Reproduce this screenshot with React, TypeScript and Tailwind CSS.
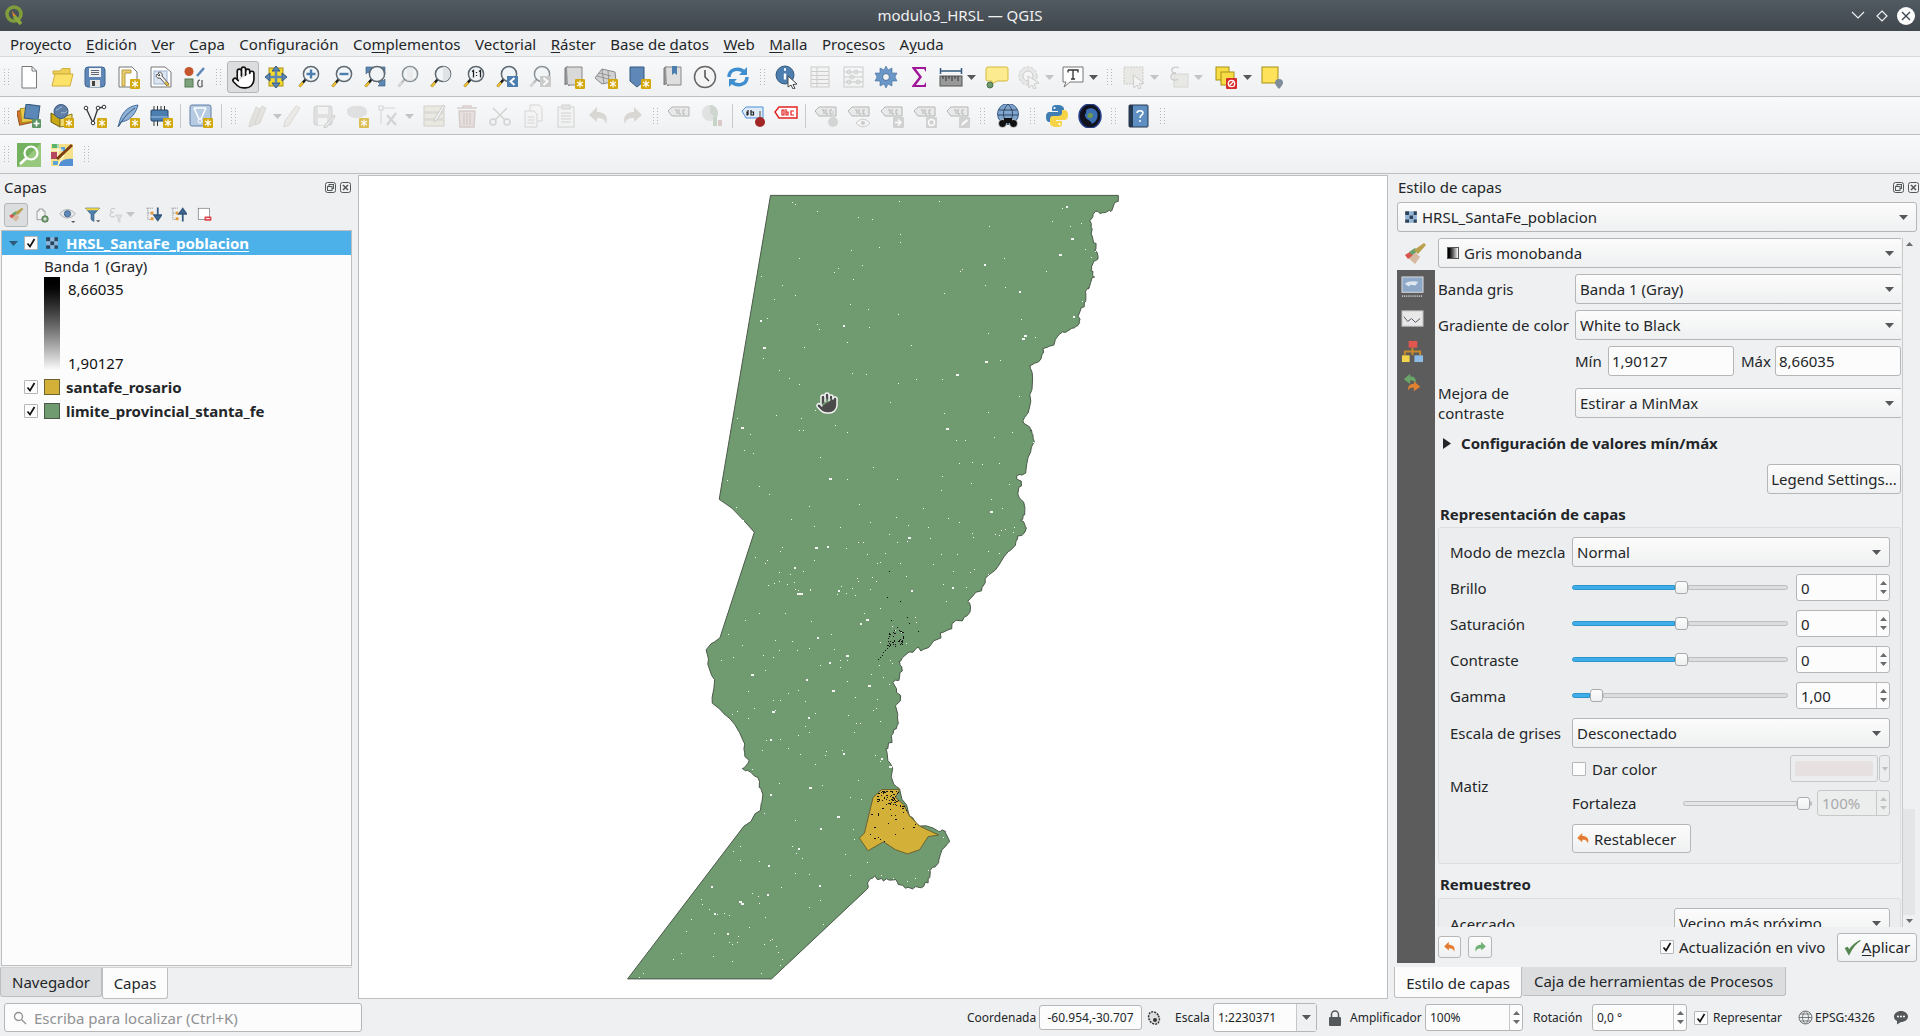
import type { ReactNode } from "react";
import { Hand } from "lucide-react";

/* ---------- small drawn icons ---------- */

const Badge = () => (
  <g>
    <rect x="14" y="14" width="10" height="10" rx="1" fill="#d3a80f" />
    <path d="M19 15.5v7M16 17l6 4M22 17l-6 4" stroke="#fff" strokeWidth="1.2" />
  </g>
);

const Mag = ({ children, dim }: { children?: ReactNode; dim?: boolean }) => (
  <g>
    <line x1="9" y1="14" x2="2.5" y2="21.5" stroke={dim ? "#aaa" : "#1a1a1a"} strokeWidth="2.6" />
    <line x1="6" y1="17.5" x2="2.5" y2="21.5" stroke={dim ? "#ccc" : "#f0c22e"} strokeWidth="2.4" />
    <circle cx="14" cy="9" r="7.6" fill="#f2f5f7" stroke="#5f6a73" strokeWidth="1.5" />
    {children}
  </g>
);

const Label = ({ color = "#999", bg = "#e4e4e4" }: { color?: string; bg?: string }) => (
  <g>
    <path d="M1 7l4-4h17v9H5z" fill={bg} stroke={color} />
    <path d="M8 6h2v4M12 5v5h2M18 6h-2v4h2" stroke={color} fill="none" strokeWidth="1" />
  </g>
);

const icons: Record<string, ReactNode> = {
  new: (
    <g fill="#fff" stroke="#777">
      <path d="M5 1.5h10l4.500 4.500v17H5z" />
      <path d="M15 1.500v4.500h4.500" fill="none" />
    </g>
  ),
  open: (
    <g stroke="#d1ae3a">
      <path d="M3 6h7l2-2.500h8V9H3z" fill="#efcf55" />
      <path d="M5 9h18l-3 12H2z" fill="#fde26a" />
    </g>
  ),
  save: (
    <g>
      <rect x="2" y="2" width="20" height="20" rx="3" fill="#5f88b8" stroke="#3f658f" />
      <rect x="6" y="3" width="12" height="9" fill="#eef1f4" />
      <path d="M8 5.500h8M8 7.500h8M8 9.500h8" stroke="#667" />
      <rect x="7" y="15" width="10" height="7" fill="#e6e6e6" />
      <rect x="9" y="16" width="3" height="5" fill="#444" />
    </g>
  ),
  layout: (
    <g>
      <path d="M3 2h13l5 5v15H3z" fill="#fff" stroke="#777" />
      <path d="M6 5h9v3H9v13H6z" fill="#e8cd72" stroke="#b89c3c" />
      <Badge />
    </g>
  ),
  manager: (
    <g>
      <path d="M2 2h14l6 5v15H2z" fill="#fff" stroke="#777" />
      <rect x="5" y="6" width="13" height="13" fill="#dce6f2" stroke="#9db4d1" />
      <path d="M9 8c2-2 5 0 4 3l7 8-2 2-7-8c-3 1-5-2-3-4l2 2 1-1z" fill="#eee" stroke="#555" />
      <path d="M16 17l4 4" stroke="#d8b23a" strokeWidth="2" />
    </g>
  ),
  style: (
    <g>
      <circle cx="7" cy="6.500" r="4.500" fill="#c4552d" />
      <path d="M15 11l7-8" stroke="#5f88b8" strokeWidth="2.500" />
      <rect x="3" y="14" width="8" height="8" fill="#7ca37c" stroke="#557755" />
      <path d="M18 15c-3 0-3 7 0 7s2-2 2-3v-4M20 22v-4" stroke="#555" fill="none" strokeWidth="1.200" />
    </g>
  ),
  panSel: (
    <g>
      <rect x="5" y="3" width="14" height="18" fill="#f6d92f" stroke="#a88f17" />
      <path d="M12 1l4 5H8zM12 23l4-5H8zM1 12l5-4v8zM23 12l-5-4v8z" fill="#5c88b5" stroke="#35597e" />
      <path d="M6 12h12M12 6v12" stroke="#5c88b5" strokeWidth="2.500" />
    </g>
  ),
  zoomIn: (
    <Mag>
      <path d="M14 4.500v9M9.500 9h9" stroke="#4d7eb0" strokeWidth="2.400" />
    </Mag>
  ),
  zoomOut: (
    <Mag>
      <path d="M9.500 9h9" stroke="#4d7eb0" strokeWidth="2.400" />
    </Mag>
  ),
  zoomFull: (
    <g>
      <path d="M3 2h7l-2 2 3 3-3 3-3-3-2 2zM22 2v7l-2-2-3 3-3-3 3-3-2-2zM22 21h-7l2-2-3-3 3-3 3 3 2-2z" fill="#5c88b5" stroke="#35597e" strokeWidth=".6" />
      <Mag />
    </g>
  ),
  zoomSel: (
    <Mag dim>
      <path d="M14 2v14" stroke="#ddd" strokeWidth="6" opacity=".5" />
    </Mag>
  ),
  zoomLayer: (
    <Mag>
      <path d="M14 1.500a7.500 7.500 0 0 1 0 15z" fill="#dfe3e6" />
    </Mag>
  ),
  zoom11: (
    <Mag>
      <path d="M10 6.500l1.500-1v7M17 6.500l1.500-1v7M14.500 7v1M14.500 10v1" stroke="#222" fill="none" strokeWidth="1.300" />
    </Mag>
  ),
  zoomLast: (
    <g>
      <Mag />
      <rect x="12" y="11" width="11" height="11" fill="#4d7eb0" />
      <path d="M19.500 13l-4 3.500 4 3.500" stroke="#fff" strokeWidth="2" fill="none" />
    </g>
  ),
  zoomNext: (
    <g>
      <Mag dim />
      <rect x="12" y="11" width="11" height="11" fill="#bbb" />
      <path d="M15.500 13l4 3.500-4 3.500" stroke="#fff" strokeWidth="2" fill="none" />
    </g>
  ),
  newMap: (
    <g>
      <path d="M4 3c2-2 4-1 4 1v17c0-2-2-3-4-1z" fill="#999" stroke="#777" />
      <path d="M6 2h15v18H7" fill="#d9d9d9" stroke="#888" />
      <Badge />
    </g>
  ),
  map3d: (
    <g>
      <path d="M1 13L8 4l13 3 1 9-14 3z" fill="#d2d2d2" stroke="#888" />
      <path d="M5 8l12 3M3 11l15 4M8 4l2 15M14 6l1 11" stroke="#888" fill="none" strokeWidth=".8" />
      <Badge />
    </g>
  ),
  bookmark: (
    <g>
      <path d="M3 2h14v14l-7 6-7-6z" fill="#5f88b8" stroke="#35597e" />
      <Badge />
    </g>
  ),
  bookmarks: (
    <g>
      <path d="M4 3c2-2 4-1 4 1v17c0-2-2-3-4-1z" fill="#999" stroke="#777" />
      <path d="M6 2h15v18H7" fill="#dedede" stroke="#888" />
      <path d="M12 1h5v9l-2.500-2-2.500 2z" fill="#4d7eb0" />
    </g>
  ),
  clock: (
    <g>
      <circle cx="12" cy="12" r="10.500" fill="#f4f4f4" stroke="#666" strokeWidth="1.500" />
      <path d="M12 5v7l4 4" stroke="#444" strokeWidth="1.400" fill="none" />
    </g>
  ),
  refresh: (
    <g fill="none" stroke="#3f8fd0" strokeWidth="3.400">
      <path d="M3 12c0-8 10-10 15-5" />
      <path d="M21 12c0 8-10 10-15 5" />
      <path d="M21 2v8h-8z" fill="#3f8fd0" stroke="none" />
      <path d="M3 22v-8h8z" fill="#3f8fd0" stroke="none" />
    </g>
  ),
  identify: (
    <g>
      <circle cx="10" cy="10" r="9" fill="#4d7eb0" stroke="#35597e" />
      <path d="M10 8.500v6M9 4.500h2" stroke="#fff" strokeWidth="2.400" />
      <path d="M13 11l9 8-4 .5 2 4-2 .5-2-4-3 2z" fill="#fff" stroke="#444" />
    </g>
  ),
  table: (
    <g fill="#f2f2f2" stroke="#bbb">
      <rect x="3" y="2" width="18" height="20" />
      <path d="M3 6.500h18M3 10.500h18M3 14.500h18M3 18.500h18M9 2v20" fill="none" />
    </g>
  ),
  abacus: (
    <g fill="none" stroke="#bbb">
      <rect x="3" y="2" width="19" height="20" />
      <path d="M3 7h19M3 12h19M3 17h19" />
      <circle cx="8" cy="7" r="2" />
      <circle cx="15" cy="7" r="2" />
      <circle cx="11" cy="12" r="2" />
      <circle cx="17" cy="17" r="2" />
      <circle cx="8" cy="17" r="2" />
    </g>
  ),
  gear: (
    <g>
      <path d="M12 1l2 4 4-2 0 5 5 0-2 4 2 4-5 0 0 5-4-2-2 4-2-4-4 2 0-5-5 0 2-4-2-4 5 0 0-5 4 2z" fill="#6a96c8" stroke="#44709e" strokeWidth=".6" />
      <circle cx="12" cy="12" r="3.500" fill="#f1f1f1" stroke="#44709e" />
    </g>
  ),
  sigma: <path d="M5 2h14v5l-2-3H9l6 8-6 8h8l2-3v5H5v-1l7-9-7-9z" fill="#a0189a" />,
  ruler: (
    <g>
      <rect x="1" y="11" width="22" height="10" fill="#999" stroke="#555" />
      <path d="M4 11v3M7 11v5M10 11v3M13 11v5M16 11v3M19 11v5" stroke="#333" />
      <path d="M1 6h22M1.500 3v6M22.500 3v6" stroke="#35597e" strokeWidth="1.500" />
    </g>
  ),
  tip: (
    <g>
      <path d="M3 2h18a2 2 0 0 1 2 2v10a2 2 0 0 1-2 2H12l-5 3v-3H3a2 2 0 0 1-2-2V4a2 2 0 0 1 2-2z" fill="#fdeb90" stroke="#d3b93c" />
      <circle cx="5" cy="20" r="3" fill="#6f9a6e" stroke="#49704a" />
    </g>
  ),
  action: (
    <g>
      <circle cx="11" cy="11" r="9" fill="#e3e3e3" stroke="#bbb" strokeDasharray="3 1.500" />
      <circle cx="11" cy="11" r="5" fill="#f6f6f6" stroke="#bbb" />
      <path d="M11 11l11 7-5 1 2 4-2 1-2-4-3 3z" fill="#f4f4f4" stroke="#bbb" />
    </g>
  ),
  text: (
    <g>
      <path d="M2 2h20v15H9l-6 5 2-5H2z" fill="#fff" stroke="#777" />
      <path d="M7 5h10v2.500M12 5v9M10 14h4M7 5v2.500" stroke="#333" fill="none" strokeWidth="1.300" />
    </g>
  ),
  selectTool: (
    <g>
      <rect x="2" y="2" width="19" height="17" fill="#e4e3dd" stroke="#bbb" strokeDasharray="2 1" />
      <path d="M11 10l11 8-5 1 2 4-2 1-2-4-3 3z" fill="#f4f4f4" stroke="#bbb" />
    </g>
  ),
  epsilon: (
    <g>
      <rect x="8" y="9" width="14" height="13" fill="#e4e3dd" stroke="#ccc" />
      <path d="M13 3c-4-2-8 0-7 3 0 2 2 2 4 2-3 0-5 1-5 4s4 4 7 2" fill="none" stroke="#bbb" strokeWidth="1.300" />
    </g>
  ),
  deselect: (
    <g>
      <rect x="1" y="2" width="13" height="13" fill="#f8dc45" stroke="#a88f17" />
      <rect x="6" y="7" width="13" height="13" fill="#f8dc45" stroke="#a88f17" />
      <rect x="11" y="13" width="11" height="11" rx="1" fill="#d82b2b" />
      <circle cx="16.500" cy="18.500" r="3.200" fill="none" stroke="#fff" strokeWidth="1.300" />
      <path d="M14.500 20.500l4-4" stroke="#fff" strokeWidth="1.300" />
    </g>
  ),
  pin: (
    <g>
      <rect x="2" y="2" width="16" height="16" fill="#fde25a" stroke="#a88f17" />
      <path d="M19 14a4 4 0 0 1 4 4c0 2-4 6-4 6s-4-4-4-6a4 4 0 0 1 4-4z" fill="#7f8c99" />
    </g>
  ),
  dataSource: (
    <g>
      <rect x="1" y="6" width="12" height="14" transform="rotate(-12 7 13)" fill="#d3762c" stroke="#9a4f16" />
      <rect x="4" y="4" width="12" height="14" transform="rotate(-6 10 11)" fill="#edc94b" stroke="#a88f17" />
      <rect x="8" y="1" width="14" height="14" transform="rotate(8 15 8)" fill="#5c88b8" stroke="#35597e" />
      <rect x="15" y="15" width="9" height="9" rx="1" fill="#5e9463" />
      <path d="M19.500 16.500v6M16.500 19.500h6" stroke="#fff" strokeWidth="1.600" />
    </g>
  ),
  gpkg: (
    <g>
      <path d="M1 9l9 5v9l-9-5z" fill="#c9a816" stroke="#6e5c0a" />
      <path d="M10 14l12-4v11l-12 2z" fill="#ecd86a" stroke="#8d7a1c" />
      <circle cx="11" cy="7.500" r="7" fill="#5f7fa6" stroke="#3b5a80" />
      <path d="M6 6c3 0 3-3 6-3M11 9c3-1 4 1 6-2" stroke="#a6bdd8" fill="none" />
      <Badge />
    </g>
  ),
  newShp: (
    <g>
      <path d="M3 4l7 15 5-15 6-1" fill="none" stroke="#333" strokeWidth="1.300" />
      <circle cx="3" cy="4" r="1.800" fill="#fff" stroke="#333" />
      <circle cx="10" cy="19" r="1.800" fill="#fff" stroke="#333" />
      <circle cx="15" cy="4" r="1.800" fill="#fff" stroke="#333" />
      <circle cx="21" cy="3" r="1.800" fill="#fff" stroke="#333" />
      <Badge />
    </g>
  ),
  quill: (
    <g>
      <path d="M22 1c-9 1-15 6-18 15l-2 7 3-5 4-1c6-2 11-8 13-16z" fill="#8fb1d6" stroke="#44709e" />
      <path d="M19 4C13 8 8 13 3 22" stroke="#35597e" fill="none" />
      <Badge />
    </g>
  ),
  chip: (
    <g>
      <rect x="2" y="6" width="17" height="11" rx="1" fill="#4d7eb0" stroke="#24486e" />
      <path d="M5 2v4M8.500 2v4M12 2v4M15.500 2v4M5 17v5M8.500 17v5" stroke="#333" />
      <path d="M2 13h17" stroke="#9fc0e2" />
      <Badge />
    </g>
  ),
  vdb: (
    <g>
      <rect x="1" y="1" width="21" height="21" rx="2" fill="#b6cbe2" stroke="#5f7fa6" />
      <path d="M5 4l6 13 6-13M5 4h12" fill="none" stroke="#fff" strokeWidth="1.500" />
      <circle cx="11" cy="17" r="2" fill="#b6cbe2" stroke="#fff" />
      <Badge />
    </g>
  ),
  pencils: (
    <g fill="#dcdad4" stroke="#cfcdc6">
      <path d="M11 3l4 2-6 16-5 2 1-5z" />
      <path d="M17 2l4 2-6 15-5 2 1-5z" />
    </g>
  ),
  pencil: <path d="M17 2l4 2-11 17-5 2 1-6z" fill="#e8e6e0" stroke="#cfcdc6" />,
  saveEdit: (
    <g>
      <rect x="2" y="2" width="18" height="19" rx="2" fill="#d8d8d8" stroke="#c4c4c4" />
      <rect x="6" y="3" width="10" height="7" fill="#f3f3f3" />
      <rect x="6" y="14" width="9" height="7" fill="#f3f3f3" />
      <path d="M22 11l1 2-8 10-3 1 1-3z" fill="#e6e6e6" stroke="#bbb" />
    </g>
  ),
  blob: (
    <g>
      <path d="M2 6c2-5 12-5 17-3 4 2 4 8 0 9-4 1-6 3-10 2S1 11 2 6z" fill="#d8d8d8" />
      <path d="M16 12l1 1" stroke="#bbb" />
      <Badge />
    </g>
  ),
  vertex: (
    <g fill="none" stroke="#c8c8c8">
      <rect x="2" y="2" width="4" height="4" />
      <path d="M6 4h12M4 6v14" />
      <path d="M10 11l9 10M19 9l-9 12" strokeWidth="2.400" />
    </g>
  ),
  tableEdit: (
    <g>
      <g fill="#e6e4da" stroke="#c6c4b8">
        <rect x="2" y="2" width="20" height="6" />
        <rect x="2" y="9" width="20" height="6" />
        <rect x="2" y="16" width="20" height="6" />
      </g>
      <path d="M21 1l2 1-8 14-3 2 1-4z" fill="#f2f2f2" stroke="#bbb" />
    </g>
  ),
  trash: (
    <g fill="none" stroke="#c9bcb8" strokeWidth="1.400">
      <path d="M2 4h20M8 4V2h8v2" />
      <path d="M4 7h16l-1 16H5z" fill="#e0d7d4" />
      <path d="M9 9v12M12 9v12M15 9v12" />
    </g>
  ),
  scissors: (
    <g fill="none" stroke="#c6c6c6" strokeWidth="1.500">
      <circle cx="5" cy="18" r="3" />
      <circle cx="19" cy="18" r="3" />
      <path d="M7 16L19 4M17 16L5 4" />
    </g>
  ),
  copy: (
    <g fill="#f4f4f4" stroke="#c8c8c8">
      <path d="M9 1h9l3 3v13H9z" />
      <path d="M4 7h9l3 3v13H4z" />
      <path d="M6.500 13h7M6.500 16h7M6.500 19h7" />
    </g>
  ),
  paste: (
    <g fill="#f2f2f2" stroke="#c4c4c4">
      <rect x="4" y="3" width="16" height="20" />
      <rect x="8" y="1" width="8" height="4" fill="#ddd" />
      <path d="M7 9h10M7 12h10M7 15h10M7 18h10" />
    </g>
  ),
  undo: <path d="M10 3L2 11l8 7v-4c5 0 8 1 9 6 3-8-2-12-9-12z" fill="#cfcbc6" />,
  redo: <path d="M14 3l8 8-8 7v-4c-5 0-8 1-9 6-3-8 2-12 9-12z" fill="#cfcbc6" />,
  abc: <Label />,
  pie: (
    <g>
      <circle cx="10" cy="9" r="8" fill="#d9d9d9" />
      <path d="M10 9V1a8 8 0 0 1 6 13z" fill="#bfc9bf" />
      <rect x="13" y="13" width="4" height="9" fill="#b5c9b5" />
      <rect x="18" y="16" width="4" height="6" fill="#d3b8b8" />
    </g>
  ),
  abPin: (
    <g>
      <path d="M1 7l4-4h17v11H5z" fill="#dfeaf6" stroke="#4a90d9" />
      <path d="M7 6v5M10 6v5h2.500V8H10M7 8h-1v3h1" stroke="#222" fill="none" strokeWidth="1.200" />
      <path d="M19 7v8" stroke="#999" strokeWidth="2" />
      <circle cx="19" cy="18" r="5" fill="#a32626" />
    </g>
  ),
  abcRed: (
    <g>
      <path d="M1 8l4-5h18v11H5z" fill="#fff" stroke="#e32020" strokeWidth="1.400" />
      <path d="M8 6h2v5H8zM12 5v6h2V8h-2M20 7h-3v4h3" stroke="#e32020" fill="none" strokeWidth="1.200" />
    </g>
  ),
  abGrey: (
    <g>
      <Label />
      <path d="M19 7v8" stroke="#ccc" strokeWidth="2" />
      <circle cx="19" cy="18" r="5" fill="#c8c8c8" />
    </g>
  ),
  abcEye: (
    <g>
      <Label />
      <path d="M9 19c4-5 10-5 14 0-4 5-10 5-14 0z" fill="#f5f5f5" stroke="#bbb" />
      <circle cx="16" cy="19" r="2" fill="#bbb" />
    </g>
  ),
  abcMove: (
    <g>
      <Label />
      <rect x="13" y="13" width="11" height="11" rx="1" fill="#c4c4c4" />
      <path d="M15 18.500h5M18 15.500l3 3-3 3" stroke="#fff" strokeWidth="1.600" fill="none" />
    </g>
  ),
  abcRot: (
    <g>
      <Label />
      <rect x="13" y="13" width="11" height="11" rx="1" fill="#c4c4c4" />
      <circle cx="18.500" cy="18.500" r="3" stroke="#fff" strokeWidth="1.500" fill="none" />
    </g>
  ),
  abcPen: (
    <g>
      <Label />
      <rect x="13" y="13" width="11" height="11" rx="1" fill="#c4c4c4" />
      <path d="M15 22l1-3 5-4 1 2-5 4z" fill="#fff" />
    </g>
  ),
  globeFind: (
    <g>
      <circle cx="12" cy="10" r="10.500" fill="#7ea4cf" stroke="#3b5f8a" />
      <path d="M3 6h18M2 11h20M12 0c-6 6-6 14 0 20M12 0c6 6 6 14 0 20" stroke="#234" fill="none" strokeWidth=".8" />
      <circle cx="6.500" cy="19.500" r="4" fill="#111" stroke="#fff" strokeWidth=".6" />
      <circle cx="17.500" cy="19.500" r="4" fill="#111" stroke="#fff" strokeWidth=".6" />
      <rect x="8" y="14" width="8" height="5" fill="#111" />
    </g>
  ),
  python: (
    <g>
      <path d="M12 1C7 1 7 3 7 5v2h6v1H5C2 8 1 10 1 13s1 5 4 5h2v-3c0-2 2-3 4-3h5c2 0 3-1 3-3V5c0-2-2-4-7-4z" fill="#3f7eb5" />
      <circle cx="9.500" cy="4" r="1.100" fill="#fff" />
      <path d="M12 23c5 0 5-2 5-4v-2h-6v-1h8c3 0 4-2 4-5s-1-5-4-5h-2v3c0 2-2 3-4 3H8c-2 0-3 1-3 3v4c0 2 2 4 7 4z" fill="#f7d348" />
      <circle cx="14.500" cy="20" r="1.100" fill="#fff" />
    </g>
  ),
  earth: (
    <g>
      <ellipse cx="12" cy="12" rx="11" ry="12" fill="#10131f" stroke="#27418a" strokeWidth="1.500" />
      <path d="M8 6c4-3 9-2 11 2 2 5-1 10-5 12-1-4-6-4-7-8 0-3 2-3 1-6z" fill="#3a6fb3" />
      <path d="M10 10c2-2 5-1 5 1s-2 4-4 3-2-3-1-4z" fill="#6f9a4e" />
    </g>
  ),
  help: (
    <g>
      <rect x="3" y="1" width="19" height="22" rx="1" fill="#5f8fc2" stroke="#24384f" />
      <rect x="3" y="1" width="4" height="22" fill="#24384f" />
      <path d="M11 9c0-3 6-3 6 0 0 2-3 2-3 5M14 16v2" stroke="#fff" strokeWidth="1.500" fill="none" />
    </g>
  ),
  locator: (
    <g>
      <rect x="0" y="0" width="24" height="24" fill="#75b25f" />
      <path d="M0 24L24 0v24z" fill="#a5d28a" opacity=".7" />
      <circle cx="14" cy="10" r="6.500" fill="none" stroke="#fff" strokeWidth="2.200" />
      <path d="M9.500 15L3 21" stroke="#fff" strokeWidth="2.600" />
    </g>
  ),
  osmEdit: (
    <g>
      <rect x="1" y="1" width="22" height="22" fill="#f6e08a" />
      <path d="M1 9h6v7H1z" fill="#b5475f" />
      <path d="M2 1h7v4H2z" fill="#58b36b" />
      <path d="M11 4h4v4h-4zM3 18h5v4H3z" fill="#5aa7d6" />
      <path d="M9 23c0-5 6-8 14-7v7z" fill="#5590d2" />
      <path d="M1 7h12M8 1v14M14 12l-6 10" stroke="#fff" fill="none" />
      <path d="M7 16L22 2" stroke="#7b3f12" strokeWidth="3" />
    </g>
  ),
  /* dock toolbar */
  brush: (
    <g>
      <path d="M2 13l8-5 7 7-5 7z" fill="#d7b8a0" />
      <path d="M2 13l5-3 3 3-5 4z" fill="#d9534f" />
      <path d="M6 10l6-4 3 3-6 4z" fill="#6aa06a" />
      <path d="M11 8l4 4 8-9-2-2z" fill="#b8a04c" />
    </g>
  ),
  addGroup: (
    <g fill="none" stroke="#777">
      <path d="M9 3h6v3h3v13H6V6h3z" fill="#f4f4f4" />
      <circle cx="18" cy="18" r="5" fill="#6f9a6e" stroke="#49704a" />
      <path d="M18 15.500v5M15.500 18h5" stroke="#fff" strokeWidth="1.500" />
    </g>
  ),
  eye: (
    <g>
      <path d="M1 11c6-8 16-8 22 0-6 8-16 8-22 0z" fill="#e8e8e8" stroke="#999" />
      <circle cx="12" cy="11" r="4.500" fill="#5f88b8" stroke="#35597e" />
      <path d="M17 21h6l-3 3z" fill="#555" />
    </g>
  ),
  filter: (
    <g>
      <path d="M2 3h20l-8 9v10l-4-3v-7z" fill="#4d7eb0" stroke="#35597e" />
      <path d="M2 3h20l-2 3H4z" fill="#f5d93b" />
      <path d="M17 20h6l-3 3z" fill="#555" />
    </g>
  ),
  epsDim: (
    <g>
      <path d="M11 3C7 1 3 3 4 6c0 2 2 2 4 2-3 0-5 1-5 4s4 4 7 2" fill="none" stroke="#bbb" strokeWidth="1.300" />
      <path d="M11 12h10l-3 5v6l-3-2v-4z" fill="#ddd" stroke="#ccc" />
    </g>
  ),
  expand: (
    <g>
      <path d="M2 3h10M4 3v16h6M4 10h6" stroke="#777" fill="none" strokeDasharray="1.500 1" />
      <rect x="8" y="8" width="4" height="4" fill="#e69a33" />
      <rect x="8" y="16" width="4" height="4" fill="#e69a33" />
      <path d="M18 2v14M13 13l5 7 5-7z" stroke="#35597e" strokeWidth="2.500" fill="#4d7eb0" />
    </g>
  ),
  collapse: (
    <g>
      <path d="M2 3h10M4 3v16h6M4 10h6" stroke="#777" fill="none" strokeDasharray="1.500 1" />
      <rect x="8" y="8" width="4" height="4" fill="#e69a33" />
      <rect x="8" y="16" width="4" height="4" fill="#e69a33" />
      <path d="M18 22V8M13 11l5-7 5 7z" stroke="#35597e" strokeWidth="2.500" fill="#4d7eb0" />
    </g>
  ),
  removeLayer: (
    <g>
      <rect x="2" y="2" width="18" height="18" fill="#fff" stroke="#666" />
      <rect x="12" y="15" width="11" height="7" rx="1" fill="#e0424a" />
      <path d="M14.500 18.500h6" stroke="#fff" strokeWidth="1.500" />
    </g>
  ),
  /* layer properties sidebar */
  sideInfo: (
    <g>
      <rect x="1" y="1" width="22" height="16" fill="#8ea9c8" stroke="#ddd" />
      <path d="M4 8c4-3 9-3 14-2l-3 4-5-1-2 2z" fill="#dfe7f0" />
      <path d="M1 21h22" stroke="#ccc" strokeWidth="2" strokeDasharray="1 1" />
    </g>
  ),
  sideHist: (
    <g>
      <rect x="1" y="3" width="22" height="16" fill="#e8e8e8" stroke="#bbb" />
      <path d="M3 9l4 5 4-3 4 4 5-4" stroke="#556" fill="none" />
    </g>
  ),
  sideHier: (
    <g>
      <rect x="8" y="1" width="9" height="7" fill="#e2564f" />
      <path d="M12 8v4M4 16v-4h16v4M12 12v4" stroke="#c88b2c" strokeWidth="2" fill="none" />
      <rect x="1" y="16" width="8" height="7" fill="#f2d34c" />
      <rect x="14" y="16" width="9" height="7" fill="#8fbce6" />
    </g>
  ),
  sideHistory: (
    <g>
      <path d="M10 2L3 8l7 5V9c3 0 5 1 6 3 1-5-2-7-6-7z" fill="#6aa66a" />
      <path d="M14 10l7 6-7 5v-4c-3 0-5 1-6 3-1-5 2-7 6-7z" fill="#e0812f" />
    </g>
  ),
  undoOr: <path d="M10 3L2 11l8 7v-4c5 0 8 1 9 6 3-8-2-12-9-12z" fill="#e57b32" />,
  redoGr: <path d="M14 3l8 8-8 7v-4c-5 0-8 1-9 6-3-8 2-12 9-12z" fill="#6fb074" />,
  check: <path d="M2 13l5 9C11 13 16 6 23 2 15 6 10 11 7 16l-2-4z" fill="#55854f" stroke="#55854f" strokeWidth="1.500" />,
  raster: (
    <g>
      <path d="M2 2h7v7H2zM16 2h6v7h-6zM9 9h7v7H9zM2 16h7v6H2zM16 16h6v6h-6z" fill="#2c4259" />
      <path d="M9 2h7v7H9zM2 9h7v7H2zM16 9h6v7h-6zM9 16h7v6H9z" fill="#8fb4d8" />
    </g>
  ),
};

const Svg = ({ n, size = 24, dim }: { n: string; size?: number; dim?: boolean }) => (
  <svg viewBox="0 0 24 24" width={size} height={size} className={dim ? "opacity-70 shrink-0" : "shrink-0"}>
    {icons[n]}
  </svg>
);

/* ---------- toolbar parts ---------- */

const Grip = ({ w = "w-[17px]" }: { w?: string }) => (
  <div className={`${w} flex justify-center shrink-0`}>
    <svg width="5" height="19" viewBox="0 0 5 19" fill="#b4b6b8">
      {[1, 4, 7, 10, 13, 16].map((y) => (
        <g key={y}>
          <rect x="0" y={y} width="1" height="1" />
          <rect x="4" y={y} width="1" height="1" />
        </g>
      ))}
    </svg>
  </div>
);

const Arrow = ({ color = "#55585b" }: { color?: string }) => (
  <svg width="9" height="5" viewBox="0 0 9 5" className="shrink-0">
    <path d="M0 0h9L4.500 5z" fill={color} />
  </svg>
);

function Tool({ n, drop, dim, w }: { n: string; drop?: boolean; dim?: boolean; w?: string }) {
  if (drop) {
    return (
      <div className={`${w ?? "w-[44px]"} flex items-center shrink-0 pl-[4px]`}>
        <Svg n={n} dim={dim} />
        <span className="ml-[4px]">
          <Arrow color={dim ? "#c4c4c4" : "#55585b"} />
        </span>
      </div>
    );
  }
  return (
    <div className="w-[33px] flex justify-center shrink-0">
      <Svg n={n} dim={dim} />
    </div>
  );
}

const Sep = ({ w }: { w: string }) => (
  <div className={`${w} h-[24px] flex justify-center shrink-0`}>
    <div className="w-px h-full bg-[#c8cacc]" />
  </div>
);

const Toolbar = ({ h, children }: { h: string; children: ReactNode }) => (
  <div className={`${h} flex items-center pt-px border-b border-[#bcbebf] bg-gradient-to-b from-[#f8f9fa] to-[#eff0f1] shrink-0`}>
    {children}
  </div>
);

const Ul = ({ a, u, b }: { a?: string; u: string; b?: string }) => (
  <span>
    {a}
    <u className="underline-offset-2">{u}</u>
    {b}
  </span>
);

/* ---------- form widgets ---------- */

function Combo({ text, w, h = "h-[30px]", icon, small }: { text: string; w?: string; h?: string; icon?: ReactNode; small?: boolean }) {
  return (
    <div className={`${w ?? "flex-1"} ${h} flex items-center pl-[4px] pr-[8px] border border-[#b4b6b7] rounded-[3px] bg-gradient-to-b from-[#fcfcfc] to-[#eff0f1] ${small ? "text-[12px]" : ""} shrink-0 overflow-hidden`}>
      {icon}
      <span className="flex-1 truncate">{text}</span>
      <Arrow />
    </div>
  );
}

const Input = ({ text, w, h = "h-[30px]" }: { text: string; w: string; h?: string }) => (
  <div className={`${w} ${h} flex items-center px-[3px] border border-[#b4b6b7] rounded-[3px] bg-[#fcfcfc] shrink-0`}>{text}</div>
);

function Spin({ value, w = "w-[94px]", h = "h-[27px]", disabled, small }: { value: string; w?: string; h?: string; disabled?: boolean; small?: boolean }) {
  const c = disabled ? "#c4c4c4" : "#6a6d70";
  return (
    <div className={`${w} ${h} flex border ${disabled ? "border-[#c6c8c9] text-[#a8aaac] bg-[#eceded]" : "border-[#b4b6b7] bg-[#fcfcfc]"} rounded-[3px] shrink-0 ${small ? "text-[12px]" : ""}`}>
      <div className="flex-1 flex items-center pl-[4px]">{value}</div>
      <div className="w-[13px] border-l border-[#c6c8c9] flex flex-col items-center justify-center gap-[5px]">
        <svg width="7" height="4" viewBox="0 0 7 4">
          <path d="M0 4h7L3.500 0z" fill={c} />
        </svg>
        <svg width="7" height="4" viewBox="0 0 7 4">
          <path d="M0 0h7L3.500 4z" fill={c} />
        </svg>
      </div>
    </div>
  );
}

function Slider({ fill, w = "w-[216px]", disabled }: { fill: string; w?: string; disabled?: boolean }) {
  return (
    <div className={`${w} flex items-center shrink-0`}>
      {!disabled && <div className={`${fill} h-[5px] rounded-l-full bg-[#3daee9] border border-[#2f93c9] shrink-0`} />}
      {disabled && <div className={`${fill} h-[5px] rounded-l-full bg-[#e4e5e6] border border-[#bcbebf] shrink-0`} />}
      <div className="w-[13px] h-[13px] rounded-[3px] border border-[#a8aaab] bg-gradient-to-b from-[#fcfcfc] to-[#eff0f1] shrink-0" />
      <div className="flex-1 h-[5px] rounded-r-full bg-[#dcddde] border border-[#bcbebf]" />
    </div>
  );
}

const Check = ({ on = true, className = "" }: { on?: boolean; className?: string }) => (
  <div className={`w-[14px] h-[14px] border border-[#b4b6b7] bg-[#fcfcfc] rounded-[1px] flex items-center justify-center shrink-0 ${className}`}>
    {on && (
      <svg width="10" height="10" viewBox="0 0 10 10">
        <path d="M1.500 5.500l2.500 3L8.500 1" fill="none" stroke="#111" strokeWidth="1.700" />
      </svg>
    )}
  </div>
);

const Btn = ({ children, className }: { children: ReactNode; className: string }) => (
  <div className={`${className} flex items-center justify-center border border-[#b4b6b7] rounded-[3px] bg-gradient-to-b from-[#fcfcfc] to-[#eff0f1] shrink-0`}>{children}</div>
);

const DockBtns = () => (
  <div className="flex gap-[4px]">
    <svg width="11" height="11" viewBox="0 0 11 11" fill="none" stroke="#55585b">
      <rect x=".5" y=".5" width="10" height="10" rx="2" />
      <rect x="4" y="2.500" width="4.500" height="4" />
      <rect x="2.500" y="4.500" width="4.500" height="4" fill="#eff0f1" />
    </svg>
    <svg width="11" height="11" viewBox="0 0 11 11" fill="none" stroke="#55585b">
      <rect x=".5" y=".5" width="10" height="10" rx="2" />
      <path d="M3 3l5 5M8 3l-5 5" strokeWidth="1.500" />
    </svg>
  </div>
);

/* ---------- map data ---------- */

const outline: number[][] = [
  [437, 39], [1447, 39], [1447, 50], [1425, 70], [1400, 72], [1380, 70], [1368, 85], [1368, 100], [1372, 118], [1378, 130], [1378, 143], [1388, 155], [1375, 165], [1370, 180], [1372, 192], [1378, 195], [1365, 210], [1352, 222], [1348, 245], [1335, 262], [1330, 270], [1335, 282], [1320, 292], [1285, 300], [1275, 305], [1260, 325], [1228, 332], [1222, 352], [1190, 365], [1197, 378], [1190, 420], [1185, 455], [1170, 470], [1190, 482], [1197, 495], [1203, 510], [1185, 540], [1178, 570], [1152, 575], [1165, 585], [1155, 610], [1172, 625], [1175, 650], [1163, 660], [1180, 675], [1155, 690], [1148, 708], [1115, 730], [1090, 755], [1060, 772], [1050, 795], [1010, 815], [1018, 825], [1000, 845], [970, 855], [960, 868], [930, 875], [932, 885], [880, 907], [860, 905], [825, 920], [810, 930], [818, 940], [812, 958], [792, 970], [815, 995], [800, 1015], [808, 1050], [795, 1060], [790, 1085], [772, 1097], [785, 1125], [795, 1165], [812, 1175], [840, 1225], [870, 1245], [925, 1255], [945, 1255], [957, 1275], [935, 1290], [925, 1315], [900, 1330], [895, 1345], [882, 1360], [850, 1365], [820, 1358], [790, 1348], [765, 1350], [740, 1340], [722, 1350], [718, 1365], [440, 1537], [22, 1537], [360, 1245], [408, 1215], [415, 1185], [405, 1160], [380, 1142], [355, 1135], [375, 1120], [362, 1105], [360, 1085], [320, 1040], [268, 1010], [275, 965], [255, 935], [250, 908], [290, 885], [390, 683], [288, 620],
];

const rosario: number[][] = [
  [760, 1175], [812, 1175], [800, 1190], [825, 1205], [840, 1225], [870, 1245], [925, 1262], [895, 1265], [870, 1290], [835, 1298], [800, 1290], [765, 1275], [720, 1292], [695, 1268], [710, 1258], [735, 1190],
];

const px = ([x, y]: number[]) => [261 + x * 0.3444, -1 + y * 0.523];
const toPoints = (p: number[][]) => p.map((q) => px(q).map((v) => v.toFixed(1)).join(",")).join(" ");

function inside(x: number, y: number, poly: number[][]) {
  let hit = false;
  for (let i = 0, j = poly.length - 1; i < poly.length; j = i++) {
    const [xi, yi] = poly[i];
    const [xj, yj] = poly[j];
    if (yi > y !== yj > y && x < ((xj - xi) * (y - yi)) / (yj - yi) + xi) hit = !hit;
  }
  return hit;
}

let seed = 1234;
const rnd = () => {
  seed = (seed * 1103515245 + 12345) & 0x7fffffff;
  return seed / 0x7fffffff;
};

// the river edges wiggle, the straight borders stay straight
function roughen(p: number[][]) {
  const out: number[][] = [];
  p.forEach((a, i) => {
    const b = p[(i + 1) % p.length];
    out.push(a);
    const len = Math.hypot(a[0] - b[0], a[1] - b[1]);
    if (len > 12 && len < 130) {
      out.push([(a[0] * 2 + b[0]) / 3 + (rnd() - 0.5) * 9, (a[1] * 2 + b[1]) / 3 + (rnd() - 0.5) * 9]);
      out.push([(a[0] + b[0] * 2) / 3 + (rnd() - 0.5) * 9, (a[1] + b[1] * 2) / 3 + (rnd() - 0.5) * 9]);
    }
  });
  return out;
}
const outlineRough = roughen(outline);

const specks: number[][] = [];
while (specks.length < 340) {
  const x = 22 + rnd() * 1360;
  const y = 39 + rnd() * 1498;
  const keep = y > 650 ? 1 : 0.35;
  if (rnd() < keep && inside(x, y, outline) && !inside(x, y, rosario)) specks.push([x, y, rnd() < 0.08 ? 2 : 1]);
}
const bigSpecks = [
  [415, 328], [352, 481], [608, 580], [836, 693], [947, 483], [714, 849], [515, 800], [522, 800], [440, 1025], [975, 381], [1060, 355], [1172, 305], [1168, 312], [345, 1388], [350, 1392], [1275, 152], [630, 1225], [550, 1170], [615, 985], [720, 975], [657, 917], [380, 955], [1310, 120], [1075, 643], [790, 1150], [780, 1130], [565, 712],
];

const blackDots: number[][] = [];
for (let i = 0; i < 45; i++) blackDots.push([798 + (rnd() - 0.5) * 50, 885 + (rnd() - 0.5) * 30]);
for (let i = 0; i < 10; i++) blackDots.push([750 + i * 5, 925 - i * 4]);
[[812, 815], [776, 806], [782, 757], [832, 845], [838, 857], [805, 865], [866, 872], [787, 850]].forEach((p) => blackDots.push(p));

const rosarioDots: number[][] = [];
for (let i = 0; i < 90; i++) {
  const x = 745 + rnd() * 95;
  const y = 1178 + rnd() * rnd() * 60;
  if (inside(x, y, rosario)) rosarioDots.push([x, y]);
}
for (let i = 0; i < 16; i++) {
  const x = 720 + rnd() * 170;
  const y = 1220 + rnd() * 60;
  if (inside(x, y, rosario)) rosarioDots.push([x, y]);
}

function MapCanvas() {
  return (
    <svg width="1028" height="822" viewBox="0 0 1028 822" className="block">
      <polygon points={toPoints(outlineRough)} fill="#709a6f" stroke="#4a5a49" strokeWidth="1" />
      {specks.map(([x, y, s], i) => {
        const [a, b] = px([x, y]);
        return <rect key={i} x={Math.round(a)} y={Math.round(b)} width={s} height={s} fill="#f4f6f4" />;
      })}
      {bigSpecks.map((p, i) => {
        const [a, b] = px(p);
        return <rect key={i} x={Math.round(a)} y={Math.round(b)} width="3" height="2" fill="#f4f4f4" />;
      })}
      {blackDots.map((p, i) => {
        const [a, b] = px(p);
        return <rect key={i} x={Math.round(a)} y={Math.round(b)} width="1" height="1" fill="#111" />;
      })}
      <polygon points={toPoints(rosario)} fill="#d3b138" stroke="#6d6232" strokeWidth="1" />
      {rosarioDots.map((p, i) => {
        const [a, b] = px(p);
        return <rect key={i} x={Math.round(a)} y={Math.round(b)} width={i % 3 === 0 ? 2 : 1} height="1" fill="#141414" />;
      })}
    </svg>
  );
}

/* ---------- page ---------- */

function TitleBar() {
  return (
    <div className="h-[31px] relative flex items-center justify-center pb-px bg-gradient-to-b from-[#525a62] to-[#40474d] text-[#eff0f1] shrink-0">
      <svg width="20" height="22" viewBox="0 0 20 22" className="absolute left-[4px] top-[4px]">
        <circle cx="10" cy="10" r="7" fill="none" stroke="#7f9d3a" strokeWidth="3.500" />
        <path d="M10 12l7 8" stroke="#8aa83f" strokeWidth="3.500" />
        <path d="M8 7l4 5-3 0z" fill="#e08a2a" />
      </svg>
      <span>modulo3_HRSL — QGIS</span>
      <div className="absolute right-0 top-0 h-full flex items-center">
        <svg width="14" height="9" viewBox="0 0 14 9" className="mr-[11px]">
          <path d="M1 1l6 6 6-6" fill="none" stroke="#eff0f1" strokeWidth="1.200" />
        </svg>
        <svg width="12" height="12" viewBox="0 0 12 12" className="mr-[9px]">
          <path d="M6 1l5 5-5 5-5-5z" fill="none" stroke="#eff0f1" strokeWidth="1.200" />
        </svg>
        <div className="w-[18px] h-[18px] rounded-full bg-[#fcfcfc] flex items-center justify-center mr-[5px]">
          <svg width="10" height="10" viewBox="0 0 10 10">
            <path d="M1 1l8 8M9 1l-8 8" stroke="#40474d" strokeWidth="1.400" />
          </svg>
        </div>
      </div>
    </div>
  );
}

function MenuBar() {
  return (
    <div className="h-[26px] flex items-center gap-[14.5px] pl-[10px] pt-px bg-[#eff0f1] border-b border-[#d8d9da] shrink-0">
      <Ul a="Pro" u="y" b="ecto" />
      <Ul u="E" b="dición" />
      <Ul u="V" b="er" />
      <Ul u="C" b="apa" />
      <Ul a="Confi" u="g" b="uración" />
      <Ul a="Co" u="m" b="plementos" />
      <Ul a="Vect" u="o" b="rial" />
      <Ul u="R" b="áster" />
      <Ul a="Base de " u="d" b="atos" />
      <Ul u="W" b="eb" />
      <Ul u="M" b="alla" />
      <Ul a="Pro" u="c" b="esos" />
      <Ul a="A" u="y" b="uda" />
    </div>
  );
}

function Toolbars() {
  return (
    <>
      <Toolbar h="h-[40px]">
        <Grip w="w-[12px]" />
        {["new", "open", "save", "layout", "manager", "style"].map((n) => (
          <Tool key={n} n={n} />
        ))}
        <Grip />
        <div className="w-[32px] h-[32px] flex items-center justify-center shrink-0 rounded-[3px] border border-[#b4b6b7] bg-[#dcddde]">
          <Hand size={25} fill="#fff" stroke="#111" strokeWidth={1.6} />
        </div>
        {["panSel", "zoomIn", "zoomOut", "zoomFull"].map((n) => (
          <Tool key={n} n={n} />
        ))}
        <Tool n="zoomSel" dim />
        <Tool n="zoomLayer" />
        <Tool n="zoom11" />
        <Tool n="zoomLast" />
        <Tool n="zoomNext" dim />
        <Tool n="newMap" />
        <Tool n="map3d" />
        <Tool n="bookmark" />
        <Tool n="bookmarks" />
        <Tool n="clock" />
        <Tool n="refresh" />
        <Grip w="w-[16px]" />
        <Tool n="identify" />
        <Tool n="table" dim />
        <Tool n="abacus" dim />
        <Tool n="gear" />
        <Tool n="sigma" />
        <Tool n="ruler" drop w="w-[45px]" />
        <Tool n="tip" />
        <Tool n="action" drop dim />
        <Tool n="text" drop />
        <Grip />
        <Tool n="selectTool" drop dim />
        <Tool n="epsilon" drop dim w="w-[49px]" />
        <Tool n="deselect" drop />
        <Tool n="pin" />
      </Toolbar>
      <Toolbar h="h-[38px]">
        <Grip w="w-[12px]" />
        {["dataSource", "gpkg", "newShp", "quill", "chip"].map((n) => (
          <Tool key={n} n={n} />
        ))}
        <Sep w="w-[7px]" />
        <Tool n="vdb" />
        <Sep w="w-[8px]" />
        <Grip w="w-[16px]" />
        <Tool n="pencils" drop dim w="w-[33px]" />
        <Tool n="pencil" dim />
        <Tool n="saveEdit" dim />
        <Tool n="blob" dim />
        <Tool n="vertex" drop dim />
        <Tool n="tableEdit" dim />
        <Tool n="trash" dim />
        <Tool n="scissors" dim />
        <Tool n="copy" dim />
        <Tool n="paste" dim />
        <Tool n="undo" dim />
        <Tool n="redo" dim />
        <Grip w="w-[14px]" />
        <Tool n="abc" dim />
        <Tool n="pie" dim />
        <Sep w="w-[8px]" />
        <Tool n="abPin" />
        <Tool n="abcRed" />
        <Sep w="w-[7px]" />
        <Tool n="abGrey" dim />
        <Tool n="abcEye" dim />
        <Tool n="abcMove" dim />
        <Tool n="abcRot" dim />
        <Tool n="abcPen" dim />
        <Grip />
        <Tool n="globeFind" />
        <Grip w="w-[16px]" />
        <Tool n="python" />
        <Tool n="earth" />
        <Grip w="w-[15px]" />
        <Tool n="help" />
        <Grip />
      </Toolbar>
      <Toolbar h="h-[39px]">
        <Grip w="w-[12px]" />
        <Tool n="locator" />
        <Tool n="osmEdit" />
        <Grip />
      </Toolbar>
    </>
  );
}

function LayersPanel() {
  return (
    <div className="w-[358px] flex flex-col shrink-0">
      <div className="h-[28px] flex items-center justify-between pl-[4px] pr-[7px] pb-[2px] shrink-0">
        <span>Capas</span>
        <DockBtns />
      </div>
      <div className="h-[25px] flex items-center pl-[4px] shrink-0">
        <div className="w-[24px] h-[24px] flex items-center justify-center rounded-[3px] border border-[#b4b6b7] bg-[#dcddde]">
          <Svg n="brush" size={16} />
        </div>
        <div className="ml-[3px] w-[20px] flex justify-center"><Svg n="addGroup" size={16} /></div>
        <div className="ml-[6px] w-[20px] flex justify-center"><Svg n="eye" size={17} /></div>
        <div className="ml-[5px] w-[20px] flex justify-center"><Svg n="filter" size={17} /></div>
        <div className="ml-[6px] w-[34px] flex items-center gap-[2px]">
          <Svg n="epsDim" size={16} />
          <Arrow color="#c4c4c4" />
        </div>
        <div className="ml-[1px] w-[20px] flex justify-center"><Svg n="expand" size={17} /></div>
        <div className="ml-[5px] w-[20px] flex justify-center"><Svg n="collapse" size={17} /></div>
        <div className="ml-[6px] w-[20px] flex justify-center"><Svg n="removeLayer" size={15} /></div>
      </div>
      <div className="mt-[3px] ml-px w-[351px] h-[736px] border border-[#bcbebf] bg-[#fcfcfc] flex flex-col shrink-0">
        <div className="h-[24px] bg-[#4db1e9] flex items-center shrink-0">
          <svg width="9" height="5" viewBox="0 0 9 5" className="ml-[7px]">
            <path d="M0 0h9L4.500 5z" fill="#2c5a78" />
          </svg>
          <Check className="ml-[6px]" />
          <span className="ml-[7px]"><Svg n="raster" size={14} /></span>
          <span className="ml-[7px] font-bold text-white underline underline-offset-2">HRSL_SantaFe_poblacion</span>
        </div>
        <div className="h-[22px] flex items-center pl-[42px]">Banda 1 (Gray)</div>
        <div className="h-[94px] flex pl-[42px]">
          <div className="w-[16px] h-full bg-gradient-to-b from-[#000000] to-[#ffffff]" />
          <div className="ml-[8px] mt-[2px] flex flex-col justify-between h-full text-[#111]">
            <span>8,66035</span>
            <span>1,90127</span>
          </div>
        </div>
        <div className="h-[24px] mt-[4px] flex items-center pl-[22px]">
          <Check />
          <div className="ml-[6px] w-[16px] h-[16px] bg-[#d3b138] border border-[#6d6232]" />
          <span className="ml-[6px] font-bold">santafe_rosario</span>
        </div>
        <div className="h-[24px] flex items-center pl-[22px]">
          <Check />
          <div className="ml-[6px] w-[16px] h-[16px] bg-[#709a6f] border border-[#4a5a49]" />
          <span className="ml-[6px] font-bold">limite_provincial_stanta_fe</span>
        </div>
      </div>
      <div className="flex-1 flex items-start mt-px border-t border-[#d0d2d3] w-[352px]">
        <div className="w-[102px] h-[29px] flex items-center justify-center bg-[#dcddde] border border-[#bcbebf] border-t-0 rounded-b-[3px]">Navegador</div>
        <div className="w-[66px] h-[31px] flex items-center justify-center bg-[#fcfcfc] border border-[#bcbebf] border-t-0 rounded-b-[3px]">Capas</div>
      </div>
    </div>
  );
}

const Row = ({ label, children }: { label: string; children: ReactNode }) => (
  <div className="flex items-center h-[30px]">
    <span className="w-[137px] shrink-0">{label}</span>
    {children}
  </div>
);

const BoxRow = ({ label, children, className = "" }: { label: string; children: ReactNode; className?: string }) => (
  <div className={`flex items-center ${className}`}>
    <span className="w-[122px] shrink-0">{label}</span>
    {children}
  </div>
);

function StylePanel() {
  return (
    <div className="flex-1 flex flex-col min-w-0 pl-[9px]">
      <div className="h-[28px] flex items-center justify-between pr-px pl-[1px] pb-[2px] shrink-0">
        <span>Estilo de capas</span>
        <DockBtns />
      </div>
      <div className="w-[520px] shrink-0 flex">
        <Combo text="HRSL_SantaFe_poblacion" w="w-full" icon={<span className="mr-[4px] ml-[2px] flex"><Svg n="raster" size={14} /></span>} />
      </div>
      <div className="mt-[6px] w-[520px] h-[725px] flex shrink-0">
        <div className="w-[38px] flex flex-col shrink-0">
          <div className="h-[32px] flex items-center justify-center shrink-0 pr-[2px]">
            <Svg n="brush" size={24} />
          </div>
          <div className="flex-1 bg-[#5c5c5c] flex flex-col items-center gap-[9px] pt-[6px] pr-[8px]">
            <Svg n="sideInfo" size={23} />
            <Svg n="sideHist" size={23} />
            <Svg n="sideHier" size={23} />
            <Svg n="sideHistory" size={22} />
          </div>
        </div>
        <div className="flex-1 flex flex-col min-w-0">
          <div className="h-[689px] flex shrink-0">
            <div className="w-[466px] pl-[3px] overflow-hidden flex flex-col shrink-0">
              <Combo text="Gris monobanda" w="w-[465px]" icon={<span className="w-[12px] h-[12px] mr-[5px] ml-[4px] bg-gradient-to-r from-black to-white border border-[#555]" />} />
              <div className="flex flex-col gap-[6px] mt-[6px]">
                <Row label="Banda gris"><Combo text="Banda 1 (Gray)" w="w-[328px]" /></Row>
                <Row label="Gradiente de color"><Combo text="White to Black" w="w-[328px]" /></Row>
                <div className="flex items-center pl-[137px]">
                  <span className="w-[34px]">Mín</span>
                  <Input text="1,90127" w="w-[126px]" />
                  <span className="ml-[7px] w-[35px]">Máx</span>
                  <Input text="8,66035" w="w-[126px]" />
                </div>
              </div>
              <div className="mt-[12px]">
                <Row label="Mejora de contraste">
                  <Combo text="Estirar a MinMax" w="w-[328px]" />
                </Row>
              </div>
              <div className="h-[20px] mt-[15px] flex items-center pl-[5px] font-bold">
                <svg width="8" height="11" viewBox="0 0 8 11">
                  <path d="M0 0l8 5.500L0 11z" fill="#232629" />
                </svg>
                <span className="ml-[10px]">Configuración de valores mín/máx</span>
              </div>
              <div className="flex justify-end mt-[11px] shrink-0">
                <Btn className="w-[134px] h-[30px]">Legend Settings...</Btn>
              </div>
              <div className="h-[20px] mt-[10px] flex items-center pl-[2px] font-bold shrink-0">Representación de capas</div>
              <div className="mt-[3px] h-[337px] bg-[#ecedee] border border-[#dcddde] rounded-[3px] pl-[11px] pr-[11px] pt-[9px] flex flex-col shrink-0">
                <BoxRow label="Modo de mezcla"><Combo text="Normal" w="w-[318px]" /></BoxRow>
                <BoxRow label="Brillo" className="mt-[7px]">
                  <Slider fill="w-[103px]" />
                  <span className="ml-[8px]"><Spin value="0" /></span>
                </BoxRow>
                <BoxRow label="Saturación" className="mt-[9px]">
                  <Slider fill="w-[103px]" />
                  <span className="ml-[8px]"><Spin value="0" /></span>
                </BoxRow>
                <BoxRow label="Contraste" className="mt-[9px]">
                  <Slider fill="w-[103px]" />
                  <span className="ml-[8px]"><Spin value="0" /></span>
                </BoxRow>
                <BoxRow label="Gamma" className="mt-[9px]">
                  <Slider fill="w-[18px]" />
                  <span className="ml-[8px]"><Spin value="1,00" /></span>
                </BoxRow>
                <BoxRow label="Escala de grises" className="mt-[9px]"><Combo text="Desconectado" w="w-[318px]" /></BoxRow>
                <div className="flex mt-[7px]">
                  <div className="w-[122px] shrink-0 flex items-center h-[61px]">Matiz</div>
                  <div className="flex flex-col w-[318px]">
                    <div className="h-[27px] flex items-center">
                      <Check on={false} />
                      <span className="ml-[6px]">Dar color</span>
                      <div className="ml-auto flex">
                        <div className="w-[88px] h-[27px] border border-[#c6c8c9] rounded-[3px] bg-[#ecedee] flex items-center justify-center">
                          <div className="w-[78px] h-[15px] bg-[#e6e0e0] rounded-[2px]" />
                        </div>
                        <div className="w-[11px] h-[27px] ml-[1px] border border-[#c6c8c9] rounded-[3px] flex items-center justify-center">
                          <svg width="6" height="4" viewBox="0 0 6 4"><path d="M0 0h6L3 4z" fill="#c0c0c0" /></svg>
                        </div>
                      </div>
                    </div>
                    <div className="h-[26px] mt-[8px] flex items-center">
                      <span className="w-[111px]">Fortaleza</span>
                      <Slider fill="w-[114px]" w="w-[127px]" disabled />
                      <span className="ml-[7px]"><Spin value="100%" w="w-[73px]" h="h-[26px]" disabled /></span>
                    </div>
                  </div>
                </div>
                <div className="pl-[122px] mt-[8px]">
                  <Btn className="w-[119px] h-[29px] gap-[3px] justify-start pl-[3px]">
                    <Svg n="undoOr" size={15} />
                    Restablecer
                  </Btn>
                </div>
              </div>
              <div className="h-[20px] mt-[10px] flex items-center pl-[2px] font-bold shrink-0">Remuestreo</div>
              <div className="mt-[4px] h-[60px] border border-[#dcddde] rounded-[3px] bg-[#ecedee] pl-[11px] pr-[11px] pt-[9px] flex shrink-0">
                <span className="w-[224px] shrink-0 mt-[6px]">Acercado</span>
                <Combo text="Vecino más próximo" w="w-[216px]" />
              </div>
            </div>
            <div className="w-[13px] ml-px flex flex-col items-center border-l border-[#c8cacb] shrink-0">
              <div className="h-[12px] flex items-center">
                <svg width="7" height="4" viewBox="0 0 7 4"><path d="M0 4h7L3.500 0z" fill="#6a6d70" /></svg>
              </div>
              <div className="h-[559px] w-full bg-[#eff0f1]" />
              <div className="flex-1 w-full bg-[#e4e5e6]" />
              <div className="h-[12px] flex items-center">
                <svg width="7" height="4" viewBox="0 0 7 4"><path d="M0 0h7L3.500 4z" fill="#6a6d70" /></svg>
              </div>
            </div>
          </div>
          <div className="flex-1 flex items-center pl-[3px] pt-[4px]">
            <Btn className="w-[23px] h-[22px]"><Svg n="undoOr" size={14} /></Btn>
            <Btn className="w-[24px] h-[22px] ml-[7px]"><Svg n="redoGr" size={14} /></Btn>
            <Check className="ml-[168px]" />
            <span className="ml-[5px]">Actualización en vivo</span>
            <Btn className="w-[80px] h-[29px] ml-auto gap-[1px]">
              <Svg n="check" size={17} />
              <Ul u="A" b="plicar" />
            </Btn>
          </div>
        </div>
      </div>
      <div className="mt-[4px] flex items-start -ml-[3px]">
        <div className="w-[128px] h-[31px] pt-px flex items-center justify-center bg-[#fcfcfc] border border-[#bcbebf] border-t-0 rounded-b-[3px]">Estilo de capas</div>
        <div className="w-[264px] h-[29px] flex items-center justify-center bg-[#dcddde] border border-[#bcbebf] border-t-0 border-l-0 rounded-b-[3px]">Caja de herramientas de Procesos</div>
      </div>
    </div>
  );
}

function StatusBar() {
  return (
    <div className="h-[37px] flex items-center bg-[#eff0f1] text-[12px] shrink-0">
      <div className="ml-[4px] w-[358px] h-[29px] flex items-center border border-[#b4b6b7] rounded-[3px] bg-[#fcfcfc] text-[15px] text-[#909294] shrink-0">
        <svg width="14" height="14" viewBox="0 0 14 14" fill="none" stroke="#8d8f91" strokeWidth="1.300" className="ml-[8px]">
          <circle cx="5.500" cy="5.500" r="4" />
          <path d="M8.500 8.500l4.500 4.500" />
        </svg>
        <span className="ml-[7px]">Escriba para localizar (Ctrl+K)</span>
      </div>
      <span className="ml-[605px] w-[72px] shrink-0">Coordenada</span>
      <div className="w-[103px] h-[25px] flex items-center justify-center border border-[#b4b6b7] rounded-[3px] bg-[#fcfcfc] shrink-0">-60.954,-30.707</div>
      <svg width="16" height="16" viewBox="0 0 16 16" className="ml-[4px] shrink-0">
        <ellipse cx="8" cy="8" rx="5" ry="6.500" transform="rotate(-30 8 8)" fill="#ddd" stroke="#333" strokeWidth="1.500" strokeDasharray="2 1" />
        <circle cx="9" cy="10" r="2" fill="#333" />
      </svg>
      <span className="ml-[13px] w-[38px] shrink-0">Escala</span>
      <div className="w-[104px] h-[29px] flex border border-[#b4b6b7] rounded-[3px] bg-[#fcfcfc] shrink-0">
        <div className="flex-1 flex items-center pl-[4px]">1:2230371</div>
        <div className="w-[20px] border-l border-[#c6c8c9] bg-[#eff0f1] flex items-center justify-center"><Arrow /></div>
      </div>
      <svg width="14" height="16" viewBox="0 0 14 16" className="ml-[11px] shrink-0">
        <path d="M3.500 7V4.500a3.500 3.500 0 0 1 7 0V7" fill="none" stroke="#55585b" strokeWidth="1.500" />
        <rect x="1" y="7" width="12" height="9" rx="1" fill="#55585b" />
      </svg>
      <span className="ml-[8px] w-[75px] shrink-0">Amplificador</span>
      <Spin value="100%" w="w-[98px]" h="h-[27px]" />
      <span className="ml-[10px] w-[59px] shrink-0">Rotación</span>
      <Spin value="0,0 °" w="w-[95px]" h="h-[27px]" />
      <Check className="ml-[7px]" />
      <span className="ml-[5px] w-[85px] shrink-0">Representar</span>
      <svg width="15" height="15" viewBox="0 0 15 15" fill="none" stroke="#6a6d70" strokeWidth=".9" className="shrink-0">
        <circle cx="7.500" cy="7.500" r="6.500" />
        <path d="M1 7.500h13M2 4h11M2 11h11M7.500 1c-4 4-4 9 0 13M7.500 1c4 4 4 9 0 13" />
      </svg>
      <span className="ml-[2px] w-[78px] shrink-0">EPSG:4326</span>
      <svg width="16" height="15" viewBox="0 0 16 15" className="shrink-0">
        <path d="M8 1c4 0 7 2.500 7 5.500S12 12 8 12L4 14.500V11C2 10 1 8.500 1 6.500 1 3.500 4 1 8 1z" fill="#55585b" />
        <circle cx="5" cy="6.500" r="1" fill="#fff" />
        <circle cx="8" cy="6.500" r="1" fill="#fff" />
        <circle cx="11" cy="6.500" r="1" fill="#fff" />
      </svg>
    </div>
  );
}

export default function App() {
  return (
    <div className="w-[1920px] h-[1036px] flex flex-col overflow-hidden bg-[#eff0f1] text-[15px] leading-[20px] text-[#232629] font-['Noto_Sans',sans-serif]">
      <TitleBar />
      <MenuBar />
      <Toolbars />
      <div className="flex-1 flex min-h-0">
        <LayersPanel />
        <div className="mt-[1px] w-[1030px] h-[824px] relative border border-[#bcbebf] bg-white overflow-hidden shrink-0">
          <MapCanvas />
          <div className="absolute left-[456px] top-[215px]">
            <Hand size={24} fill="#4a4a4a" stroke="#f4f4f4" strokeWidth={1.5} />
          </div>
        </div>
        <StylePanel />
      </div>
      <StatusBar />
    </div>
  );
}
